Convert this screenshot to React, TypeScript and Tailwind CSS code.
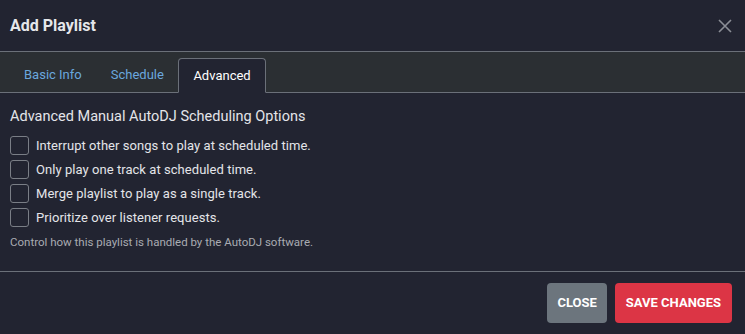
import React from 'react';

const OPTIONS = [
  'Interrupt other songs to play at scheduled time.',
  'Only play one track at scheduled time.',
  'Merge playlist to play as a single track.',
  'Prioritize over listener requests.',
];

export default function App() {
  return (
    <div className="w-[745px] h-[334px] bg-[#222431] text-[#e4e5e9] font-['Roboto',sans-serif] flex flex-col overflow-hidden">
      {/* Header */}
      <div className="h-[52px] flex items-center justify-between pl-[10px] pr-[12px] border-b border-[#6b7079]">
        <h1 className="text-[16px] font-bold text-[#e6e7ea]">Add Playlist</h1>
        <svg width="16" height="16" viewBox="0 0 16 16" className="text-[#8b8e96]">
          <path d="M2 2 L14 14 M14 2 L2 14" stroke="currentColor" strokeWidth="1.6" />
        </svg>
      </div>

      {/* Tabs */}
      <div className="h-[41px] bg-[#2b2f33] border-b border-[#6b7079] flex items-end pl-[10px]">
        <div className="flex -mb-px text-[13px]">
          <button className="h-[34px] px-[14px] text-[#6aa7de]">Basic Info</button>
          <button className="h-[34px] pl-[15px] pr-[14px] text-[#6aa7de]">Schedule</button>
          <button className="h-[35px] px-[14.5px] text-white bg-[#222431] border border-[#6b7079] border-b-[#222431] rounded-t-[4px]">
            Advanced
          </button>
        </div>
      </div>

      {/* Body */}
      <div className="flex-1 px-[10px] pt-[14px] border-b border-[#6b7079]">
        <h2 className="text-[14.5px] leading-[20px] text-[#e4e5e9] mb-[9px]">Advanced Manual AutoDJ Scheduling Options</h2>
        <div className="flex flex-col gap-[5px]">
          {OPTIONS.map(o => (
            <label key={o} className="flex items-center gap-[7px] text-[13px] leading-[19px] text-[#e4e5e9]">
              <span className="w-[19px] h-[19px] rounded-[3px] border border-[#7a7e86] bg-[#222431]" />
              <span className="tracking-[0.05px]">{o}</span>
            </label>
          ))}
        </div>
        <p className="mt-[7px] text-[11.5px] text-[#a9abb1]">Control how this playlist is handled by the AutoDJ software.</p>
      </div>

      {/* Footer */}
      <div className="h-[62px] flex items-center justify-end gap-[8px] pr-[13px]">
        <button className="h-[40px] px-[10px] rounded-[4px] bg-[#6c757d] text-white text-[13px] font-bold uppercase">Close</button>
        <button className="h-[40px] px-[11px] rounded-[4px] bg-[#dc3545] text-white text-[13px] font-bold uppercase">Save Changes</button>
      </div>
    </div>
  );
}
